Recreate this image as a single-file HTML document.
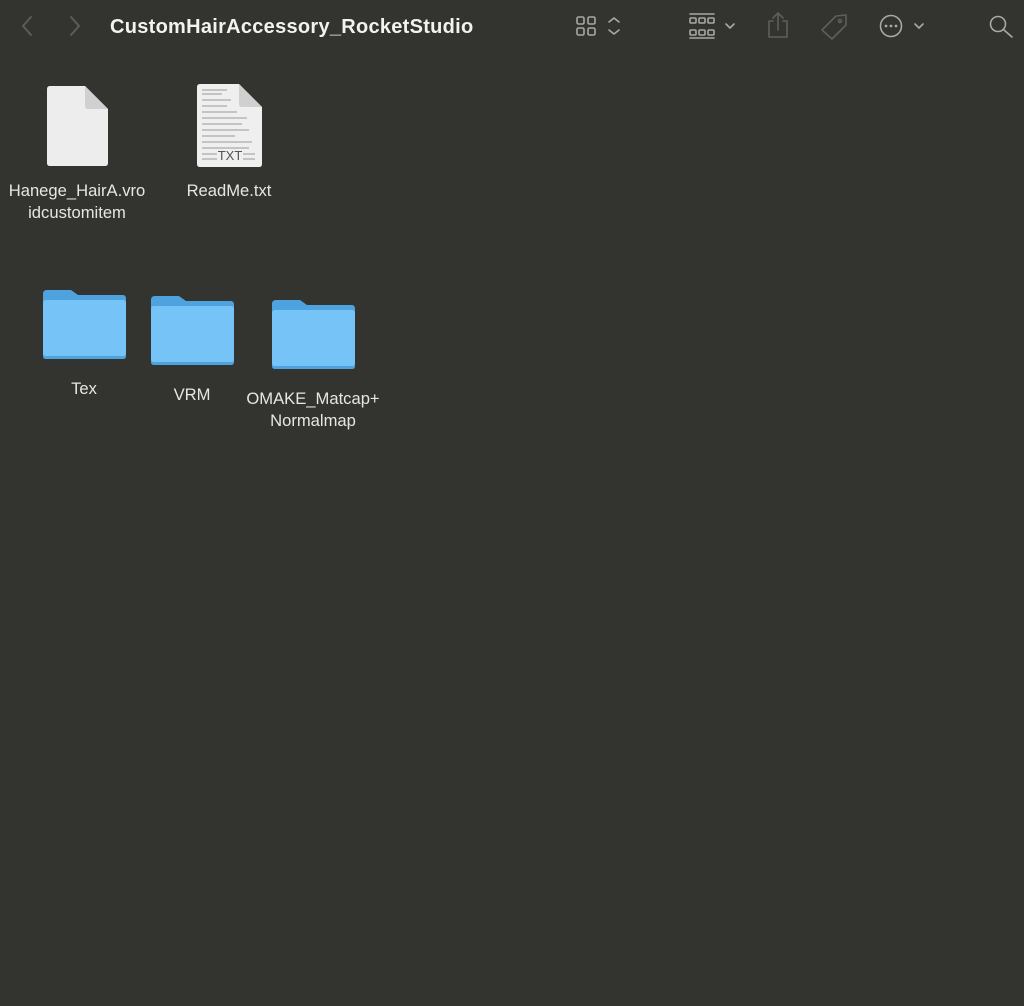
<!DOCTYPE html>
<html><head><meta charset="utf-8"><style>
body{margin:0;width:1024px;height:1006px;background:#33332f;font-family:"Liberation Sans",sans-serif;position:relative;overflow:hidden}
.t{position:absolute;color:#e6e6e4;font-size:16.6px;text-align:center;line-height:22px}
svg{position:absolute}
</style></head><body>
<svg style="left:0;top:0" width="1024" height="55">
<g fill="none" stroke-linecap="round" stroke-linejoin="round">
<path d="M31 17 L23 26 L31 35" stroke="#5c5c58" stroke-width="2"/>
<path d="M71 17 L79 26 L71 35" stroke="#5c5c58" stroke-width="2"/>
<g stroke="#a8a8a4" stroke-width="1.6">
<rect x="577" y="17" width="7" height="7" rx="1.5"/><rect x="588" y="17" width="7" height="7" rx="1.5"/>
<rect x="577" y="28" width="7" height="7" rx="1.5"/><rect x="588" y="28" width="7" height="7" rx="1.5"/>
<path d="M609 22 L614 18 L619 22 M609 30 L614 34 L619 30"/>
<path d="M690 14 H714 M690 38 H714"/>
<rect x="690" y="18" width="6" height="5" rx="1"/><rect x="699" y="18" width="6" height="5" rx="1"/><rect x="708" y="18" width="6" height="5" rx="1"/>
<rect x="690" y="30" width="6" height="5" rx="1"/><rect x="699" y="30" width="6" height="5" rx="1"/><rect x="708" y="30" width="6" height="5" rx="1"/>
<path d="M726 24 L730 28 L734 24"/>
<circle cx="891" cy="26" r="10.5"/>
<path d="M915 24 L919 28 L923 24"/>
<circle cx="998" cy="24" r="7.5"/><path d="M1004 30 L1012 37"/>
</g>
<g stroke="#5e5e5a" stroke-width="1.6">
<path d="M773 21 H769 V37 H787 V21 H783 M778 30 V13 M773 18 L778 13 L783 18"/>
<path d="M822 30 L836 16 L846 15 L846 25 L832 39 Z"/><circle cx="840" cy="21" r="1.5"/>
</g>
<g fill="#a8a8a4"><circle cx="886" cy="26" r="1.4"/><circle cx="891" cy="26" r="1.4"/><circle cx="896" cy="26" r="1.4"/></g>
</g>
<text x="110" y="33" fill="#f2f2f0" font-size="20" font-weight="bold" letter-spacing="0.28" font-family="Liberation Sans, sans-serif">CustomHairAccessory_RocketStudio</text>
</svg>

<svg style="left:47px;top:86px" width="62" height="81">
<path d="M3 0 H38 L61 23 V77 Q61 80 58 80 H3 Q0 80 0 77 V3 Q0 0 3 0Z" fill="#ededed"/>
<path d="M38 0 V20 Q38 23 41 23 H61Z" fill="#d0d0d0"/>
</svg>
<div class="t" style="left:0;width:154px;top:180px">Hanege_HairA.vro<br>idcustomitem</div>

<svg style="left:197px;top:84px" width="66" height="84">
<path d="M3 0 H42 L65 23 V80 Q65 83 62 83 H3 Q0 83 0 80 V3 Q0 0 3 0Z" fill="#efefef"/>
<path d="M42 0 V20 Q42 23 45 23 H65Z" fill="#d0d0d0"/>
<g stroke="#9a9a9a" stroke-width="1"><path d="M5 6H30M5 10H25M5 16H34M5 22H30M5 28H40M5 34H50M5 40H45M5 46H52M5 52H38M5 58H55M5 64H52M5 70H20M46 70H58M5 75H20M46 75H58"/></g>
<text x="33" y="76" font-size="13" fill="#555" text-anchor="middle" font-family="Liberation Sans, sans-serif">TXT</text>
</svg>
<div class="t" style="left:160px;width:138px;top:180px">ReadMe.txt</div>

<svg style="left:43px;top:290px" width="84" height="70"><path d="M0 4 Q0 0 4 0 H28 L35 5 H80 Q83 5 83 9 V66 Q83 69 80 69 H3 Q0 69 0 66Z" fill="#4ea3df"/><path d="M0 13 Q0 10 3 10 H80 Q83 10 83 13 V63 Q83 66 80 66 H3 Q0 66 0 63Z" fill="#76c3f7"/></svg>
<div class="t" style="left:24px;width:120px;top:378px">Tex</div>
<svg style="left:151px;top:296px" width="84" height="70"><path d="M0 4 Q0 0 4 0 H28 L35 5 H80 Q83 5 83 9 V66 Q83 69 80 69 H3 Q0 69 0 66Z" fill="#4ea3df"/><path d="M0 13 Q0 10 3 10 H80 Q83 10 83 13 V63 Q83 66 80 66 H3 Q0 66 0 63Z" fill="#76c3f7"/></svg>
<div class="t" style="left:132px;width:120px;top:384px">VRM</div>
<svg style="left:272px;top:300px" width="84" height="70"><path d="M0 4 Q0 0 4 0 H28 L35 5 H80 Q83 5 83 9 V66 Q83 69 80 69 H3 Q0 69 0 66Z" fill="#4ea3df"/><path d="M0 13 Q0 10 3 10 H80 Q83 10 83 13 V63 Q83 66 80 66 H3 Q0 66 0 63Z" fill="#76c3f7"/></svg>
<div class="t" style="left:233px;width:160px;top:388px">OMAKE_Matcap+<br>Normalmap</div>
</body></html>
